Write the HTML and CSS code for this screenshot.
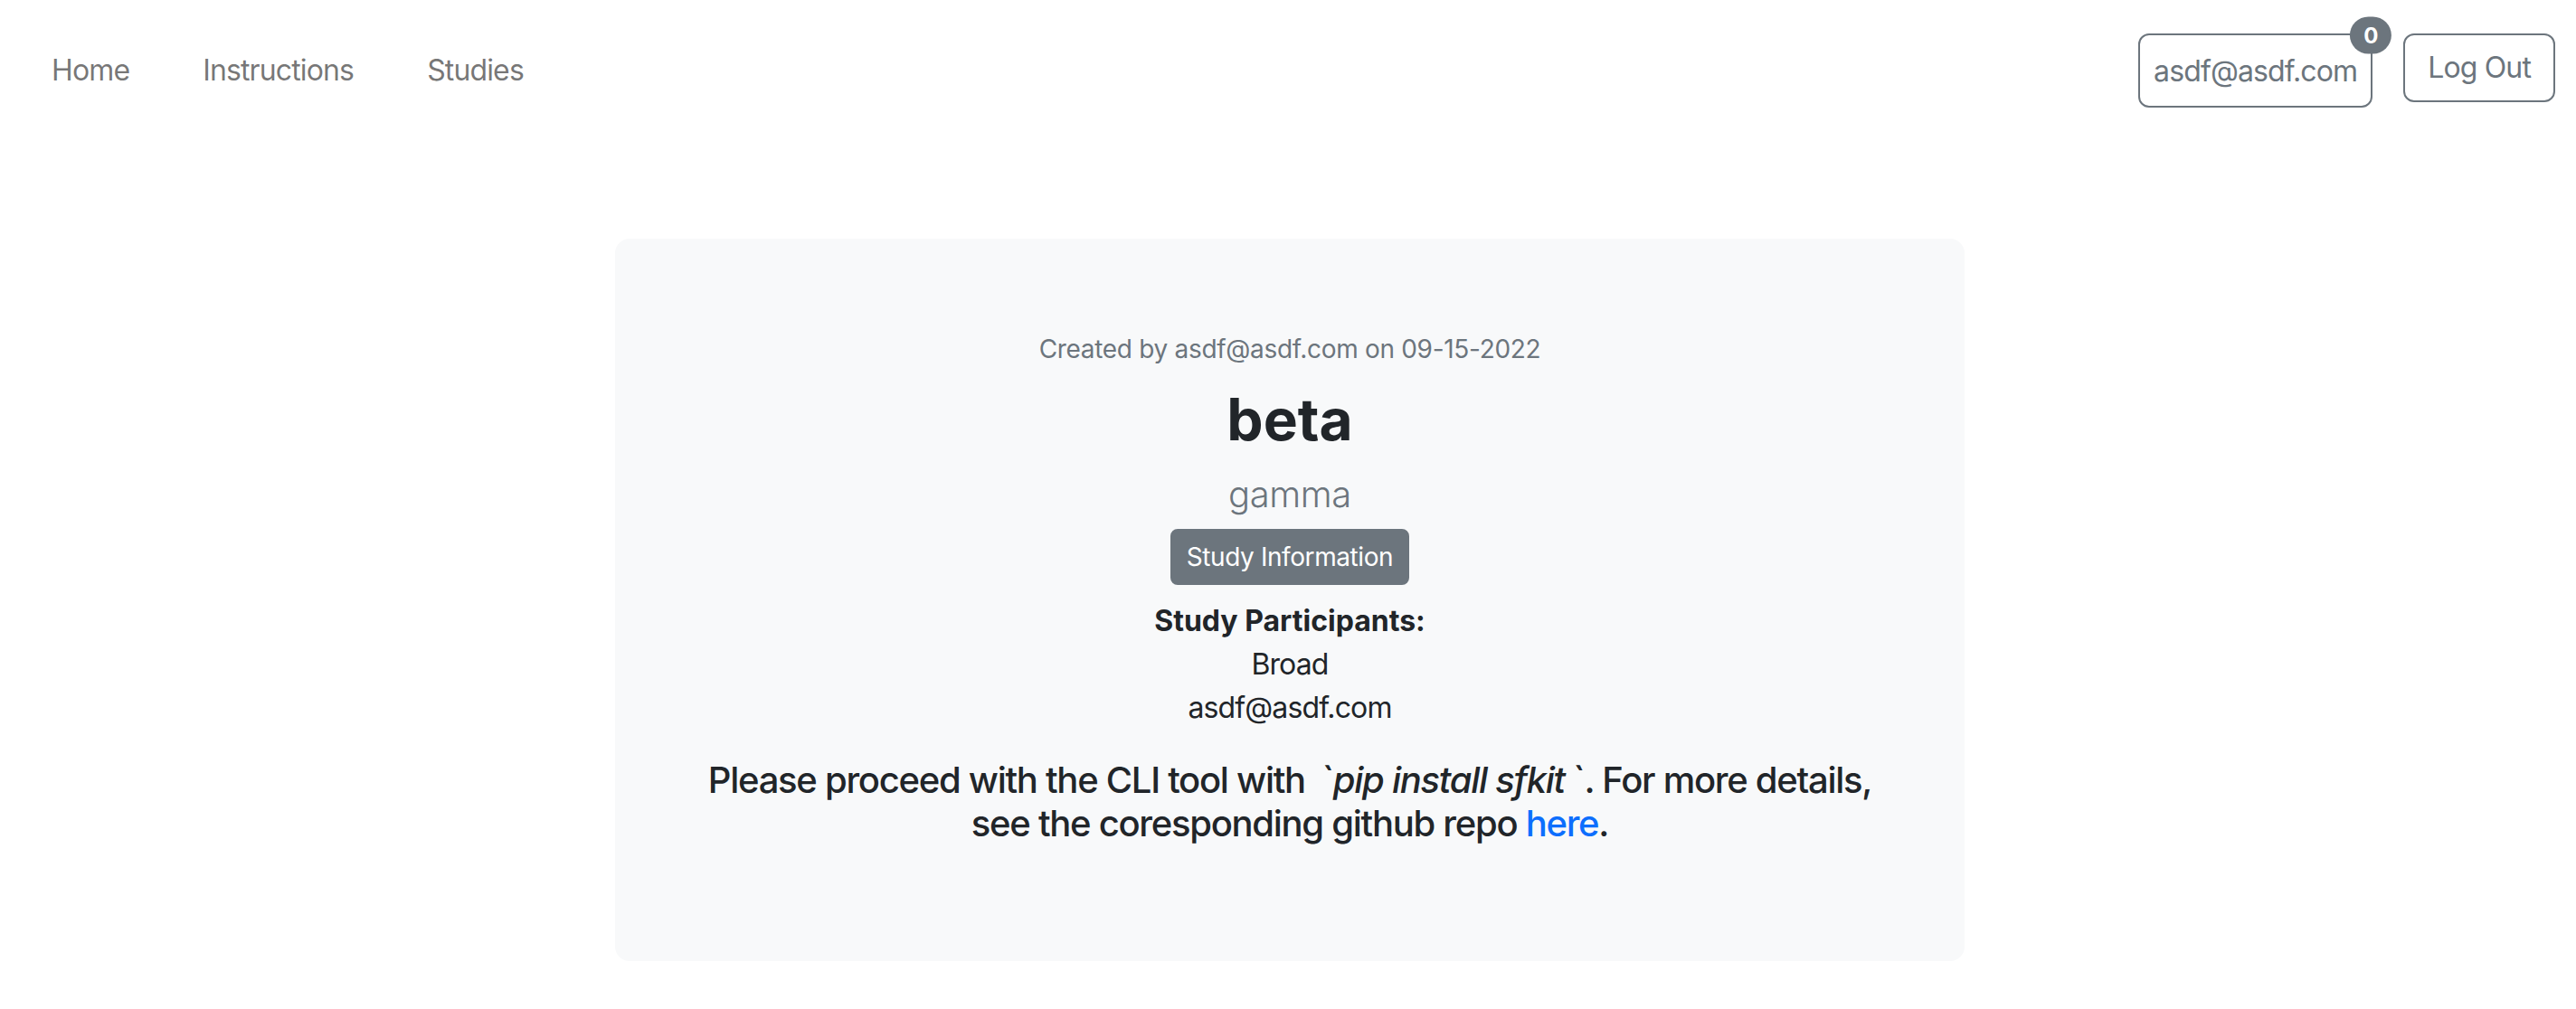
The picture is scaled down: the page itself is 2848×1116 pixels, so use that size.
FILE: index.html
```html
<!DOCTYPE html>
<html lang="en">
<head>
<meta charset="utf-8">
<title>Study beta</title>
<link rel="stylesheet" href="styles.css">
</head>
<body>
<header class="navbar">
  <nav class="nav-links">
    <a class="nav-link" href="#">Home</a>
    <a class="nav-link" href="#">Instructions</a>
    <a class="nav-link" href="#">Studies</a>
  </nav>
  <div class="nav-actions">
    <a class="btn btn-outline btn-profile" href="#">asdf@asdf.com<span class="badge">0</span></a>
    <a class="btn btn-outline btn-logout" href="#">Log Out</a>
  </div>
</header>
<main class="main">
  <section class="study-card">
    <p class="created">Created by asdf@asdf.com on 09-15-2022</p>
    <h2 class="title">beta</h2>
    <p class="lead">gamma</p>
    <button class="btn-info" type="button">Study Information</button>
    <div class="participants">
      <div class="participants-label">Study Participants:</div>
      <div>Broad</div>
      <div>asdf@asdf.com</div>
    </div>
    <h5 class="cli">Please proceed with the CLI tool with &nbsp;`<em>pip install sfkit </em>`. For more details, see the coresponding github repo <a class="link" href="#">here</a>.</h5>
  </section>
</main>
</body>
</html>
```

FILE: styles.css
```css
* { box-sizing: border-box; }
html, body {
  margin: 0;
  padding: 0;
  background: #fff;
}
body {
  font-family: Inter, "Noto Sans", "Liberation Sans", sans-serif;
  font-size: 32px;
  line-height: 1.5;
  letter-spacing: -0.027em;
  color: #212529;
}
a { text-decoration: none; }

.navbar {
  display: flex;
  justify-content: space-between;
  align-items: flex-start;
  height: 146px;
}
.nav-links {
  display: flex;
  gap: 81px;
  padding: 54px 0 0 57px;
}
.nav-link {
  color: rgba(0, 0, 0, 0.55);
  line-height: 48px;
}
.nav-actions {
  display: flex;
  align-items: flex-start;
  gap: 34px;
  padding: 37px 23px 0 0;
}
.btn {
  display: inline-block;
  position: relative;
  border: 2px solid #6c757d;
  border-radius: 12px;
  color: #6c757d;
  line-height: 48px;
}
.btn-profile {
  padding: 16px 15px 14px;
}
.btn-logout {
  padding: 12px 25px;
}
.badge {
  position: absolute;
  top: 0;
  left: 100%;
  transform: translate(-50%, -50%);
  background: #6c757d;
  color: #fff;
  font-size: 24px;
  font-weight: 700;
  line-height: 1;
  letter-spacing: 0;
  padding: 9px 15px 8px;
  border-radius: 999px;
}

.main {
  padding: 118px 0 0 680px;
}
.study-card {
  width: 1492px;
  height: 799px;
  background: #f8f9fa;
  border-radius: 16px;
  padding: 101px 96px 0;
  display: flex;
  flex-direction: column;
  align-items: center;
  text-align: center;
}
.created {
  margin: 0;
  font-size: 28px;
  line-height: 42px;
  letter-spacing: -0.011em;
  color: #6c757d;
}
.title {
  margin: 18px 0 0;
  font-size: 64px;
  line-height: 77px;
  font-weight: 700;
  letter-spacing: 0;
  color: #212529;
}
.lead {
  margin: 15px 0 0;
  font-size: 40px;
  line-height: 60px;
  font-weight: 300;
  letter-spacing: -0.01em;
  color: #6c757d;
}
.btn-info {
  margin-top: 8px;
  font-family: inherit;
  font-size: 28px;
  line-height: 42px;
  letter-spacing: -0.015em;
  padding: 8px 16px;
  background: #6c757d;
  color: #fff;
  border: 2px solid #6c757d;
  border-radius: 8px;
}
.participants {
  margin-top: 16px;
  line-height: 48px;
}
.participants-label {
  font-weight: 700;
  letter-spacing: 0;
}
.cli {
  margin: 32px 0 0;
  font-size: 40px;
  line-height: 48px;
  font-weight: 500;
  letter-spacing: -0.032em;
  color: #212529;
}
.link {
  color: #0d6efd;
}
```
